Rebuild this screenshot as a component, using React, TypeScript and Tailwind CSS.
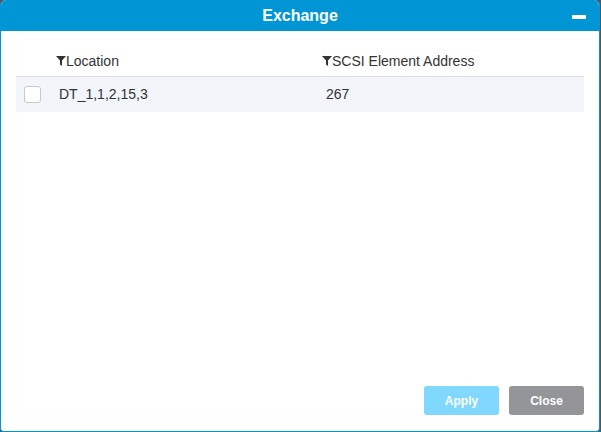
import { useState } from "react";

function FilterIcon() {
  return (
    <svg className="h-[10px] w-[10px]" viewBox="0 0 10 10" fill="currentColor">
      <path d="M0 0h10L6 4.5V10L4 8.5V4.5z" />
    </svg>
  );
}

export default function App() {
  const [checked, setChecked] = useState(false);

  return (
    <div className="h-[432px] w-[601px] bg-[#4b5863] font-['Liberation_Sans',Arial,sans-serif]">
      <div className="flex h-[432px] w-[600px] flex-col overflow-hidden rounded-t-[6px] rounded-b-[4px] border-x border-b border-[#0096d6] bg-white">
        <div className="relative flex h-[31px] shrink-0 items-center justify-center bg-[#0096d6]">
          <span className="text-[16px] font-bold text-white">Exchange</span>
          <button type="button" className="absolute right-[13px] top-[15px] h-[4px] w-[14px] bg-white" />
        </div>

        <div className="flex-1 px-[15px] pt-[9px]">
          <div className="flex h-[37px] items-center border-b border-[#dcdcdc] text-[14px] text-[#333]">
            <div className="w-[40px]" />
            <div className="flex w-[266px] items-center pt-[6px]">
              <FilterIcon />
              <span>Location</span>
            </div>
            <div className="flex items-center pt-[6px]">
              <FilterIcon />
              <span>SCSI Element Address</span>
            </div>
          </div>
          <div className="flex h-[35px] items-center bg-[#f2f5fa] text-[14px] text-[#333]">
            <div className="flex w-[43px] pl-[8px]">
              <button
                type="button"
                onClick={() => setChecked(!checked)}
                className="h-[17px] w-[17px] rounded-[3px] border border-[#c8c8c8] bg-white"
              />
            </div>
            <div className="w-[267px]">DT_1,1,2,15,3</div>
            <div>267</div>
          </div>
        </div>

        <div className="flex shrink-0 justify-end gap-[10px] pb-[16px] pr-[15px]">
          <button type="button" className="h-[29px] w-[75px] rounded-[3px] bg-[#80d8ff] text-[12px] font-bold text-white">
            Apply
          </button>
          <button type="button" className="h-[29px] w-[75px] rounded-[3px] bg-[#939598] text-[12px] font-bold text-white">
            Close
          </button>
        </div>
      </div>
    </div>
  );
}
